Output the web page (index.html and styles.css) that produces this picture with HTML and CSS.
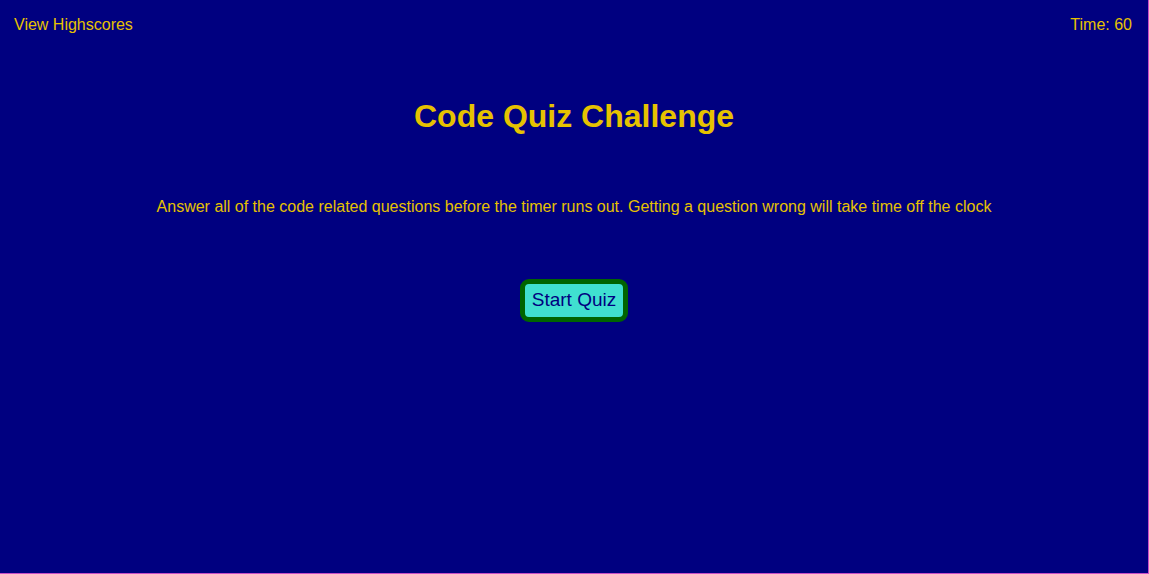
FILE: index.html
```html
<!DOCTYPE html>
<html>
<head>
<meta charset="utf-8">
<link rel="stylesheet" href="styles.css">
</head>
<body>
<div class="page">
  <header class="top">
    <a class="link">View Highscores</a>
    <span class="timer">Time: 60</span>
  </header>
  <main class="intro">
    <h1 class="title">Code Quiz Challenge</h1>
    <p class="desc">Answer all of the code related questions before the timer runs out. Getting a question wrong will take time off the clock</p>
    <button class="start">Start Quiz</button>
  </main>
</div>
</body>
</html>
```
FILE: styles.css
```css
html, body {
  margin: 0;
  padding: 0;
  background: #c84fc8;
}
.page {
  width: 1148px;
  height: 573px;
  background: #000080;
  color: #e6c200;
  font-family: "Liberation Sans", Arial, sans-serif;
  font-size: 16px;
}
.top {
  display: flex;
  justify-content: space-between;
  padding: 16px 16px 0 14px;
  line-height: 18px;
}
.intro {
  display: flex;
  flex-direction: column;
  align-items: center;
}
.title {
  margin: 64px 0 0;
  font-size: 32px;
  line-height: 37px;
  font-weight: bold;
}
.desc {
  margin: 63px 0 0;
  line-height: 18px;
}
.start {
  margin-top: 63px;
  background: #40e0d0;
  color: #000080;
  border: 5px solid #006400;
  border-radius: 9px;
  font-family: "Liberation Sans", Arial, sans-serif;
  font-size: 19px;
  line-height: 22px;
  padding: 5px 7px 6px;
}
```
